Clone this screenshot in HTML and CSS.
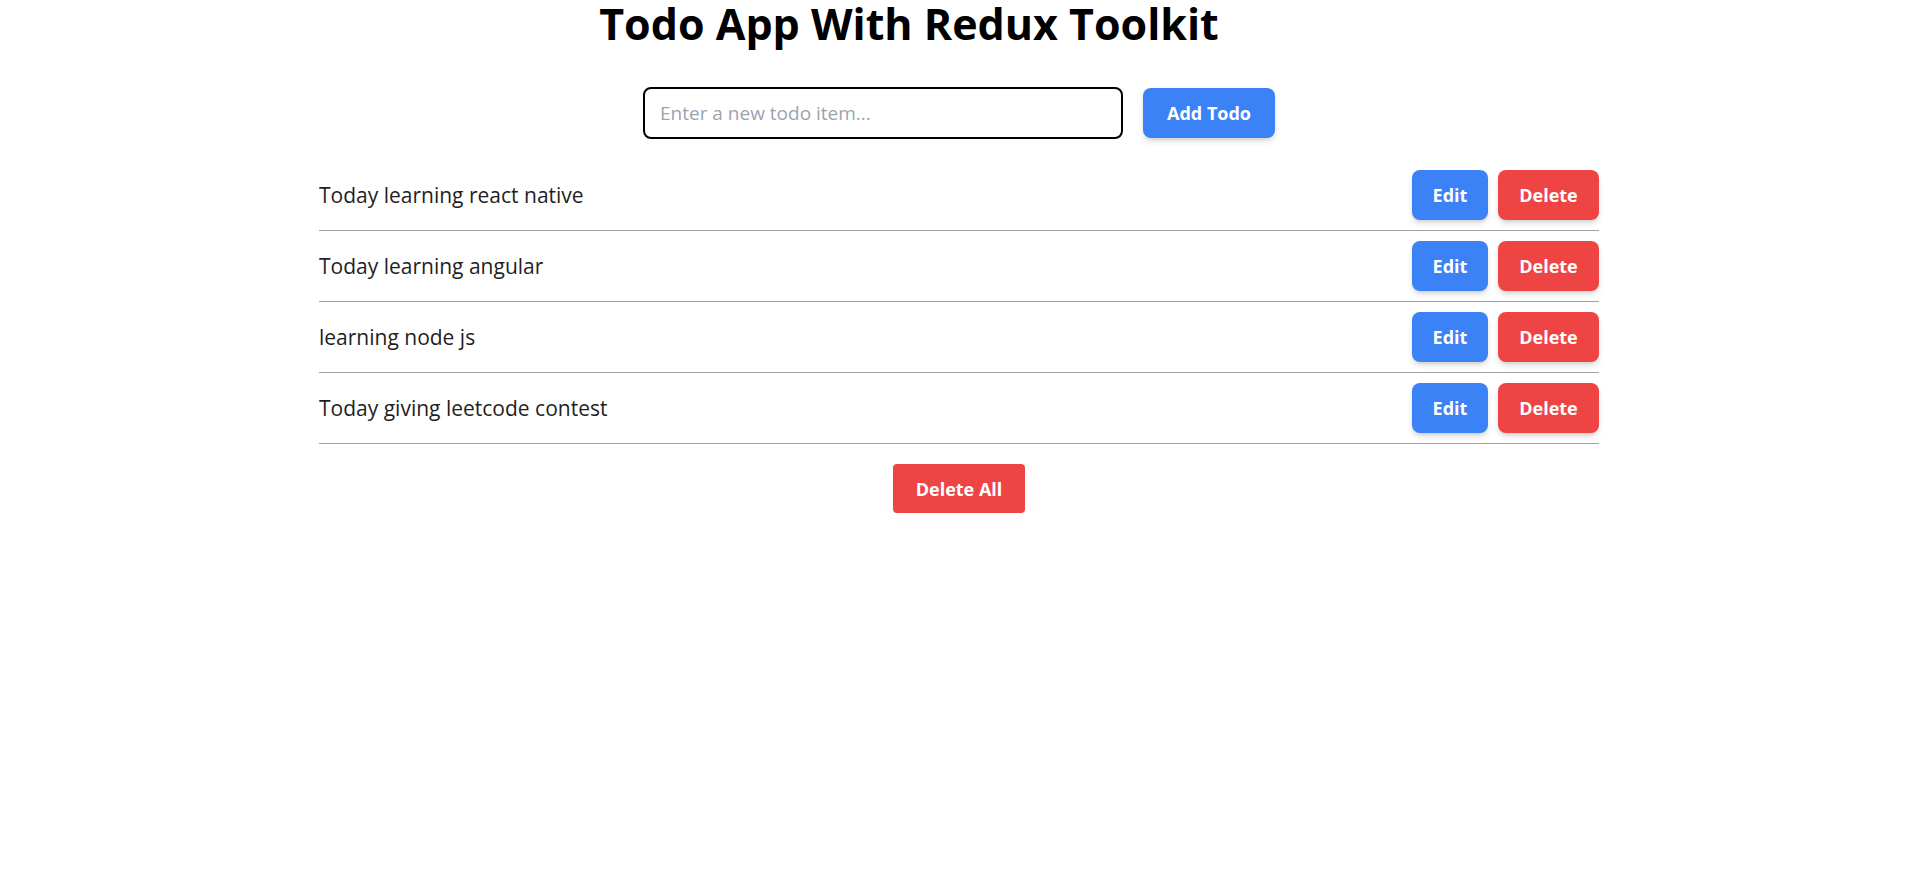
FILE: index.html
```html
<!DOCTYPE html>
<html lang="en">
<head>
<meta charset="utf-8">
<title>Todo App With Redux Toolkit</title>
<link rel="stylesheet" href="styles.css">
</head>
<body>
<div class="app">
  <h1 class="title">Todo App With Redux Toolkit</h1>
  <form class="add-form">
    <input class="add-input" type="text" placeholder="Enter a new todo item...">
    <button class="btn btn-blue btn-add" type="button">Add Todo</button>
  </form>
  <ul class="todo-list">
    <li class="todo-row">
      <span class="todo-text">Today learning react native</span>
      <div class="todo-actions">
        <button class="btn btn-blue btn-edit" type="button">Edit</button>
        <button class="btn btn-red btn-delete" type="button">Delete</button>
      </div>
    </li>
    <li class="todo-row">
      <span class="todo-text">Today learning angular</span>
      <div class="todo-actions">
        <button class="btn btn-blue btn-edit" type="button">Edit</button>
        <button class="btn btn-red btn-delete" type="button">Delete</button>
      </div>
    </li>
    <li class="todo-row">
      <span class="todo-text">learning node js</span>
      <div class="todo-actions">
        <button class="btn btn-blue btn-edit" type="button">Edit</button>
        <button class="btn btn-red btn-delete" type="button">Delete</button>
      </div>
    </li>
    <li class="todo-row">
      <span class="todo-text">Today giving leetcode contest</span>
      <div class="todo-actions">
        <button class="btn btn-blue btn-edit" type="button">Edit</button>
        <button class="btn btn-red btn-delete" type="button">Delete</button>
      </div>
    </li>
  </ul>
  <div class="footer">
    <button class="btn btn-red btn-delete-all" type="button">Delete All</button>
  </div>
</div>
</body>
</html>
```

FILE: styles.css
```css
* { box-sizing: border-box; }
html, body { margin: 0; padding: 0; background: #ffffff; }
body {
  font-family: "Open Sans", "Noto Sans", "Liberation Sans", sans-serif;
  color: #1f1f1f;
}
.app {
  display: flex;
  flex-direction: column;
  align-items: center;
}
.title {
  margin: 0;
  padding-right: 100px;
  font-size: 43px;
  line-height: 48px;
  font-weight: 700;
  color: #000;
  text-align: center;
}
.add-form {
  margin-top: 39px;
  display: flex;
  align-items: center;
  gap: 20px;
}
.add-input {
  width: 480px;
  height: 52px;
  border: 2px solid #000;
  border-radius: 8px;
  padding: 0 15px;
  font-family: inherit;
  font-size: 19px;
  color: #111;
  outline: none;
}
.add-input::placeholder { color: #9ca3af; }
.btn {
  border: none;
  color: #fff;
  font-family: inherit;
  font-weight: 700;
  font-size: 18px;
  line-height: 24px;
  cursor: pointer;
  border-radius: 8px;
  display: flex;
  align-items: center;
  justify-content: center;
}
.btn-blue { background: #3b82f6; }
.btn-red { background: #ef4444; }
.btn-add {
  width: 132px;
  height: 50px;
  box-shadow: 0 4px 6px -1px rgba(0,0,0,0.15), 0 2px 4px -2px rgba(0,0,0,0.12);
}
.todo-list {
  list-style: none;
  margin: 21px 0 0;
  padding: 0;
  width: 1280px;
}
.todo-row {
  display: flex;
  align-items: center;
  justify-content: space-between;
  padding: 10px 0;
  border-bottom: 1px solid #9ca3af;
}
.todo-text {
  font-size: 21px;
  color: #1f1f1f;
}
.todo-actions {
  display: flex;
  gap: 10px;
}
.btn-edit, .btn-delete {
  height: 50px;
  box-shadow: 0 4px 6px -1px rgba(0,0,0,0.15), 0 2px 4px -2px rgba(0,0,0,0.12);
}
.btn-edit { width: 76px; }
.btn-delete { width: 101px; }
.footer {
  margin-top: 20px;
  display: flex;
  justify-content: center;
}
.btn-delete-all {
  width: 132px;
  height: 49px;
  border-radius: 4px;
}
```
